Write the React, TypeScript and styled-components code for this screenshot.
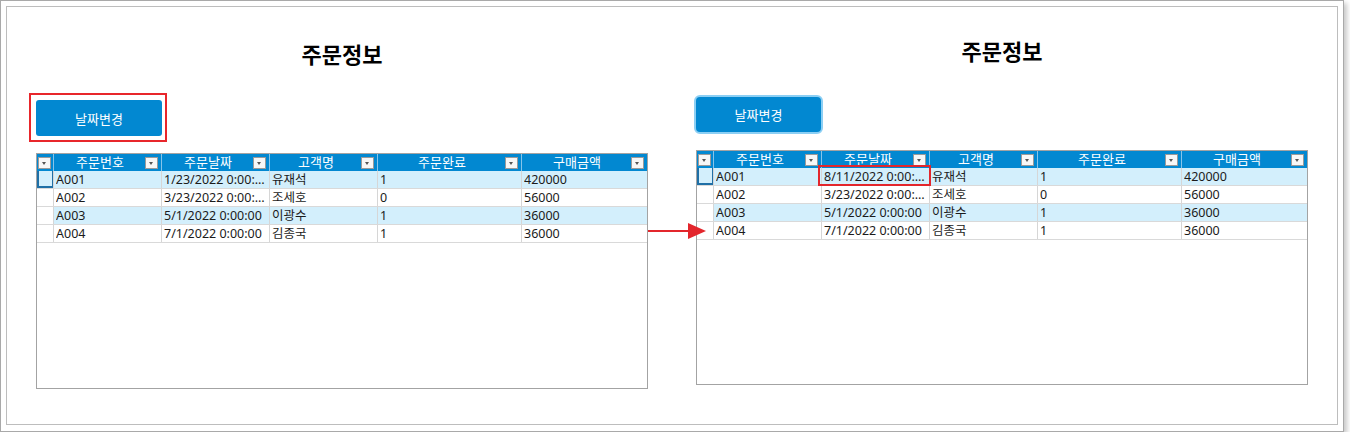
import React from "react";
import styled, { createGlobalStyle, css } from "styled-components";

const GlobalStyle = createGlobalStyle`
  body {
    margin: 0;
    background: #ffffff;
    font-family: "Noto Sans", "Noto Sans CJK KR", sans-serif;
  }
`;

const COLS = "17px 108px 108px 108px 144px 125px";

const Frame = styled.div`
  box-sizing: border-box;
  width: 1344px;
  height: 432px;
  padding: 5px 5px 6px 5px;
  border: 1px solid #a9a9a9;
  background: #ffffff;
  box-shadow: 3px 3px 5px rgba(0, 0, 0, 0.22);
`;

const Inner = styled.div`
  position: relative;
  box-sizing: border-box;
  height: 100%;
  border: 1px solid #bdbdbd;
  display: flex;
  align-items: flex-start;
  gap: 48px;
  padding-left: 29px;
`;

const Panel = styled.section<{ $top: number }>`
  width: 612px;
  display: flex;
  flex-direction: column;
  padding-top: ${(p) => p.$top}px;
`;

const Title = styled.h1`
  margin: 0;
  height: 24px;
  line-height: 24px;
  text-align: center;
  font-size: 22px;
  font-weight: 700;
  color: #000000;
`;

const Highlight = styled.div`
  align-self: flex-start;
  margin: 27px 0 0 -7px;
  padding: 5px 3px 4px 5px;
  border: 2px solid #e8262b;
`;

const Button = styled.button<{ $focused?: boolean }>`
  display: block;
  box-sizing: border-box;
  width: 126px;
  height: 36px;
  border: none;
  border-radius: 3px;
  background: #0288d1;
  color: #ffffff;
  font-family: inherit;
  font-size: 13px;
  padding: 0;
  ${(p) =>
    p.$focused &&
    css`
      width: 129px;
      height: 39px;
      margin: 32px 0 0 -2px;
      border: 2px solid #8ccff4;
      border-radius: 6px;
    `}
`;

const Grid = styled.div<{ $top: number; $height: number }>`
  box-sizing: border-box;
  margin-top: ${(p) => p.$top}px;
  height: ${(p) => p.$height}px;
  border: 1px solid #a3a3a3;
  background: #ffffff;
`;

const HeaderRow = styled.div`
  display: grid;
  grid-template-columns: ${COLS};
  height: 17px;
  background: #0288d1;
`;

const HeadCell = styled.div`
  display: flex;
  align-items: center;
  box-sizing: border-box;
  padding: 0 3px 0 1px;
  border-right: 1px solid #86c4ea;
  color: #ffffff;
  font-size: 13px;
  line-height: 17px;
  &:last-child {
    border-right: none;
  }
`;

const HeadLabel = styled.span`
  flex: 1;
  text-align: center;
  white-space: nowrap;
`;

const Drop = styled.span`
  position: relative;
  box-sizing: border-box;
  width: 13px;
  height: 12px;
  border: 1px solid #9a9a9a;
  background: #f7f7f7;
  flex: none;
  &::after {
    content: "";
    position: absolute;
    left: 3px;
    top: 4px;
    border-left: 2.5px solid transparent;
    border-right: 2.5px solid transparent;
    border-top: 3px solid #555555;
  }
`;

const Row = styled.div<{ $alt: boolean }>`
  display: grid;
  grid-template-columns: ${COLS};
  box-sizing: border-box;
  height: 18px;
  border-bottom: 1px solid #d9d9d9;
  background: ${(p) => (p.$alt ? "#d3effc" : "#ffffff")};
`;

const RowHead = styled.div<{ $current: boolean }>`
  border-right: 1px solid #d6d6d6;
  background: #ffffff;
  ${(p) =>
    p.$current &&
    css`
      background: #d3effc;
      box-shadow: inset 2px 0 0 #1f6fa6, inset -1px 0 0 #1f6fa6,
        inset 0 -2px 0 #1f6fa6;
    `}
`;

const Cell = styled.div<{ $marked?: boolean }>`
  position: relative;
  min-width: 0;
  box-sizing: border-box;
  padding: 0 2px 0 2px;
  border-right: 1px solid #d6d6d6;
  font-size: 12.5px;
  line-height: 17px;
  color: #1b1b1b;
  &:last-child {
    border-right: none;
  }
  ${(p) =>
    p.$marked &&
    css`
      &::after {
        content: "";
        position: absolute;
        z-index: 1;
        top: -3px;
        right: -2px;
        bottom: -1px;
        left: -4px;
        border: 2px solid #e3262c;
      }
    `}
`;

const CellText = styled.span`
  display: block;
  overflow: hidden;
  white-space: nowrap;
  text-overflow: ellipsis;
`;

const Arrow = styled.svg`
  position: absolute;
  left: 641px;
  top: 215px;
`;

type Order = [string, string, string, string, string];

const HEADERS = ["주문번호", "주문날짜", "고객명", "주문완료", "구매금액"];

const BASE: Order[] = [
  ["A001", "1/23/2022 0:00:00", "유재석", "1", "420000"],
  ["A002", "3/23/2022 0:00:00", "조세호", "0", "56000"],
  ["A003", "5/1/2022 0:00:00", "이광수", "1", "36000"],
  ["A004", "7/1/2022 0:00:00", "김종국", "1", "36000"],
];

const CHANGED: Order[] = BASE.map((r, i) =>
  i === 0 ? [r[0], "8/11/2022 0:00:00", r[2], r[3], r[4]] : r
);

type OrderGridProps = {
  rows: Order[];
  top: number;
  height: number;
  marked?: boolean;
};

function OrderGrid({ rows, top, height, marked }: OrderGridProps) {
  return (
    <Grid $top={top} $height={height}>
      <HeaderRow>
        <HeadCell>
          <Drop />
        </HeadCell>
        {HEADERS.map((h) => (
          <HeadCell key={h}>
            <HeadLabel>{h}</HeadLabel>
            <Drop />
          </HeadCell>
        ))}
      </HeaderRow>
      {rows.map((r, i) => (
        <Row key={r[0]} $alt={i % 2 === 0}>
          <RowHead $current={i === 0} />
          {r.map((v, j) => (
            <Cell key={j} $marked={marked && i === 0 && j === 1}>
              <CellText>{v}</CellText>
            </Cell>
          ))}
        </Row>
      ))}
    </Grid>
  );
}

export default function App() {
  return (
    <>
      <GlobalStyle />
      <Frame>
        <Inner>
          <Panel $top={35}>
            <Title>주문정보</Title>
            <Highlight>
              <Button>날짜변경</Button>
            </Highlight>
            <OrderGrid rows={BASE} top={11} height={236} />
          </Panel>
          <Panel $top={32}>
            <Title>주문정보</Title>
            <Button $focused>날짜변경</Button>
            <OrderGrid rows={CHANGED} top={16} height={235} marked />
          </Panel>
          <Arrow width="60" height="18" viewBox="0 0 60 18">
            <line x1="0" y1="9" x2="42" y2="9" stroke="#e3262c" strokeWidth="2" />
            <polygon points="40,1 58,9 40,17" fill="#e3262c" />
          </Arrow>
        </Inner>
      </Frame>
    </>
  );
}
